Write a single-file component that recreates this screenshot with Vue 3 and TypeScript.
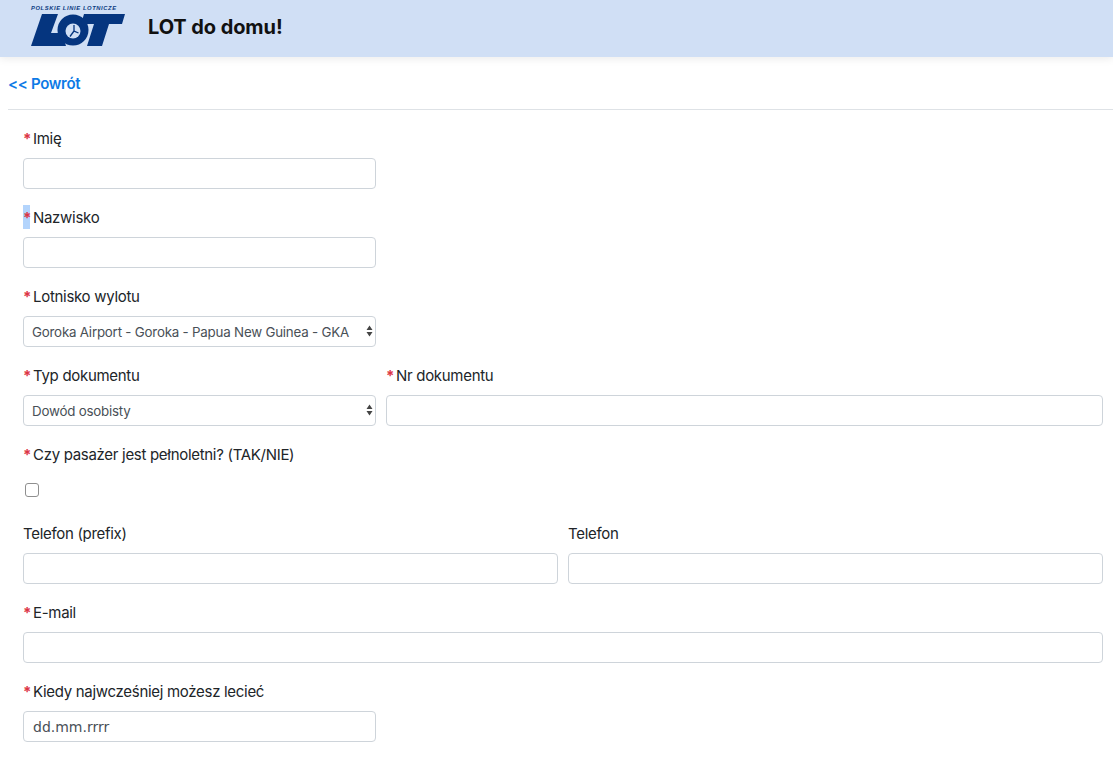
<script setup lang="ts">
const req = true
</script>

<template>
  <div class="page">
    <header class="top">
      <svg class="logo" viewBox="0 0 96 46" width="96" height="46" role="img" aria-label="LOT">
        <text class="tiny" x="1" y="9.5">POLSKIE LINIE LOTNICZE</text>
        <path class="navy" d="M12 14H28L21 33H32L36 46H1Z" />
        <circle class="navy" cx="43" cy="30" r="15.5" />
        <circle class="white" cx="43" cy="31" r="7.5" />
        <path class="hand" d="M44 25V31L48.5 33M44 31L40 36.5" />
        <path class="navy" d="M54 14H95L92 24H79L72 46H57L64 24H51Z" />
      </svg>
      <h1>LOT do domu!</h1>
    </header>
    <a class="back" href="#">&lt;&lt; Powrót</a>
    <hr class="rule" />
    <form class="form" @submit.prevent>
      <div class="half field">
        <label><span class="star">*</span>Imię</label>
        <input class="ctl" type="text" />
      </div>
      <div class="half field">
        <label><span class="star picked">*</span>Nazwisko</label>
        <input class="ctl" type="text" />
      </div>
      <div class="half field">
        <label><span class="star">*</span>Lotnisko wylotu</label>
        <div class="selwrap">
          <select class="ctl sel"><option>Goroka Airport - Goroka - Papua New Guinea - GKA</option></select>
          <svg class="arrows" viewBox="0 0 7 12" width="7" height="12"><path d="M3.5 0.5L6.5 5H0.5ZM3.5 11.5L0.5 7H6.5Z" /></svg>
        </div>
      </div>
      <div class="row doc">
        <div class="field">
          <label><span class="star">*</span>Typ dokumentu</label>
          <div class="selwrap">
            <select class="ctl sel"><option>Dowód osobisty</option></select>
            <svg class="arrows" viewBox="0 0 7 12" width="7" height="12"><path d="M3.5 0.5L6.5 5H0.5ZM3.5 11.5L0.5 7H6.5Z" /></svg>
          </div>
        </div>
        <div class="field">
          <label><span class="star">*</span>Nr dokumentu</label>
          <input class="ctl" type="text" />
        </div>
      </div>
      <div class="field">
        <label><span class="star">*</span>Czy pasażer jest pełnoletni? (TAK/NIE)</label>
        <div class="checkwrap"><input class="check" type="checkbox" /></div>
      </div>
      <div class="row phone">
        <div class="field">
          <label>Telefon (prefix)</label>
          <input class="ctl" type="text" />
        </div>
        <div class="field">
          <label>Telefon</label>
          <input class="ctl" type="text" />
        </div>
      </div>
      <div class="field">
        <label><span class="star">*</span>E-mail</label>
        <input class="ctl" type="text" />
      </div>
      <div class="half field">
        <label><span class="star">*</span>Kiedy najwcześniej możesz lecieć</label>
        <input class="ctl date" type="text" placeholder="dd.mm.rrrr" />
      </div>
    </form>
  </div>
</template>

<style>
html, body { margin: 0; background: #fff; }
</style>

<style scoped>
.page {
  font-family: Inter, "Liberation Sans", sans-serif;
  font-size: 16px;
  color: #212529;
  height: 776px;
  overflow: hidden;
}
.top {
  height: 57px;
  background: #d0dff5;
  box-shadow: 0 2px 8px rgba(0, 0, 0, 0.08);
  display: flex;
  align-items: flex-start;
  padding-left: 30px;
  box-sizing: border-box;
  gap: 22px;
}
.logo { flex: none; }
.tiny {
  font: italic 700 5.8px "Liberation Sans", sans-serif;
  fill: #0b3a82;
  letter-spacing: 0.6px;
}
.navy { fill: #05357f; }
.white { fill: #d0dff5; }
.hand { fill: none; stroke: #05357f; stroke-width: 1.3; }
h1 {
  margin: 15px 0 0;
  font-size: 20px;
  line-height: 24px;
  font-weight: 700;
  letter-spacing: -0.08px;
  color: #111;
}
.back {
  display: block;
  margin: 17px 0 0 8px;
  color: #0d7ae6;
  font-weight: 600;
  font-size: 15px;
  line-height: 20px;
  letter-spacing: -0.32px;
  text-decoration: none;
}
.rule {
  margin: 15px 0 0 8px;
  border: 0;
  border-top: 1px solid #dee2e6;
}
.form {
  padding: 16px 10px 0 23px;
  display: flex;
  flex-direction: column;
  gap: 16px;
}
.field { display: flex; flex-direction: column; min-width: 0; }
.half { width: 353px; }
label {
  font-size: 15px;
  letter-spacing: -0.3px;
  line-height: 26px;
  margin-bottom: 8px;
  height: 24px;
}
.star {
  display: inline-block;
  width: 7px;
  height: 24px;
  vertical-align: top;
  margin-right: 3px;
  color: #dc3545;
  font-weight: 700;
  text-align: center;
}
.picked { background: #b3d4fc; }
.ctl {
  box-sizing: border-box;
  width: 100%;
  height: 31px;
  border: 1px solid #ced4da;
  border-radius: 4px;
  background: #fff;
  padding: 0 9px;
  font-family: inherit;
  font-size: 14px;
  color: #495057;
  outline: none;
}
.selwrap { position: relative; height: 31px; }
.sel {
  appearance: none;
  -webkit-appearance: none;
  font-size: 13.33px;
  padding: 0 8px;
  letter-spacing: -0.21px;
}
.arrows {
  position: absolute;
  right: 3px;
  top: 9px;
  fill: #444;
  pointer-events: none;
}
.date { font-family: "DejaVu Sans", sans-serif; letter-spacing: 0; }
.date::placeholder { color: #495057; opacity: 1; }
.row { display: grid; gap: 10px; }
.doc { grid-template-columns: 353px 1fr; }
.phone { grid-template-columns: 1fr 1fr; }
.checkwrap { height: 31px; display: flex; align-items: center; }
.check {
  appearance: none;
  -webkit-appearance: none;
  box-sizing: border-box;
  width: 14px;
  height: 14px;
  margin: 0 0 0 2px;
  border: 1px solid #8f8f8f;
  border-radius: 3px;
  background: #fff;
}
</style>
